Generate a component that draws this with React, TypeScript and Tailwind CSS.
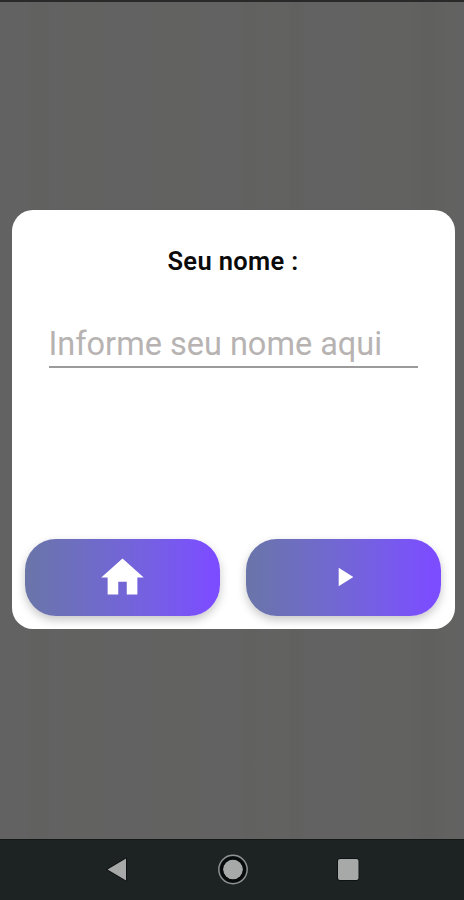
const actionClass =
  "flex h-[77px] w-[195px] items-center justify-center rounded-[31px] bg-linear-to-r from-[#6a75a8] to-[#7c4dff] to-95% text-white shadow-[0_4px_10px_rgba(0,0,0,0.22)]";

function NameDialog() {
  return (
    <div className="ml-[11.5px] flex h-[419px] w-[443px] flex-col overflow-hidden rounded-[21px] bg-white">
      <h1 className="mt-[35px] text-center text-[25.5px] leading-[32px] font-semibold tracking-[0.35px] text-[#0a0a0a]">
        Seu nome :
      </h1>
      <input
        type="text"
        placeholder="Informe seu nome aqui"
        className="mx-[37px] mt-[43px] h-[48px] border-b-2 border-[#9b9b9b] pt-[2px] text-[32.5px] text-black outline-none placeholder:text-[#b7b3b2]"
      />
      <div className="mt-auto mb-[13.5px] flex justify-between px-[13.5px]">
        <button className={actionClass} aria-label="Home">
          <svg viewBox="0 0 24 24" className="size-[51px]" fill="currentColor">
            <path d="M10 20v-6h4v6h5v-8h3L12 3 2 12h3v8z" />
          </svg>
        </button>
        <button className={actionClass} aria-label="Play">
          <svg viewBox="0 0 24 24" className="size-8" fill="currentColor">
            <path d="M8 5v14l11-7z" />
          </svg>
        </button>
      </div>
    </div>
  );
}

function NavigationBar() {
  return (
    <div className="h-[61px] border-t border-[#131717] bg-[#1d2222]">
      <svg viewBox="0 0 464 60" className="h-[60px] w-full">
        <g fill="#a7a9a9" stroke="#0b0e0e" strokeWidth="1.5" paintOrder="stroke">
          <path d="M107.5 29.5 126 18.5v22z" />
          <circle cx="233" cy="29.5" r="10" />
          <rect x="338" y="19" width="20.5" height="21" rx="2" />
        </g>
        <circle cx="233" cy="29.5" r="11.5" fill="none" stroke="#080b0b" strokeWidth="3" />
        <circle cx="233" cy="29.5" r="14.2" fill="none" stroke="#919393" strokeWidth="1.4" />
      </svg>
    </div>
  );
}

export default function App() {
  return (
    <div className="flex h-[900px] w-[464px] flex-col overflow-hidden bg-[#626262] font-[Roboto,sans-serif]">
      <div className="h-[2px] bg-[#292929]" />
      {/* dimmed backdrop with faint vertical grain */}
      <div className="flex-1 bg-[linear-gradient(90deg,#626262_0_28px,#61615f_32px_48px,#626262_50px_64px,#626260_68px_100px,#626262_104px_148px,#626260_156px_196px,#626262_204px_240px,#61615f_244px_250px,#626262_264px,#626260_280px_288px,#60605e_292px_299px,#626262_306px_356px,#626260_376px_400px,#626262_410px,#60605e_424px_432px,#626260_446px,#626262_456px)] pt-[208px]">
        <NameDialog />
      </div>
      <NavigationBar />
    </div>
  );
}
